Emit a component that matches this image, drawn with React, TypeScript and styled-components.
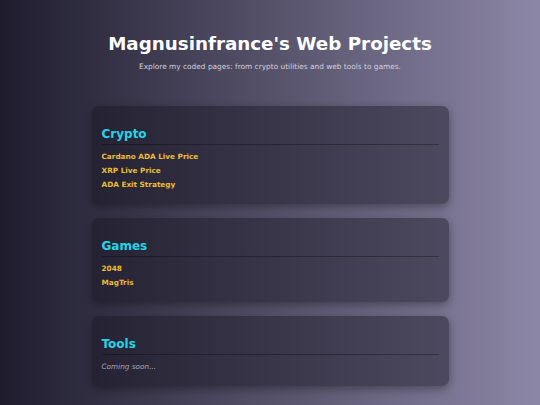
import styled, { createGlobalStyle } from 'styled-components';

type Section = {
  title: string;
  links: string[];
  empty?: string;
};

const sections: Section[] = [
  { title: 'Crypto', links: ['Cardano ADA Live Price', 'XRP Live Price', 'ADA Exit Strategy'] },
  { title: 'Games', links: ['2048', 'MagTris'] },
  { title: 'Tools', links: [], empty: 'Coming soon...' },
];

const App = () => {
  return (
    <>
      <GlobalStyle />
      <Page>
        <Header>
          <Title>Magnusinfrance's Web Projects</Title>
          <Subtitle>Explore my coded pages: from crypto utilities and web tools to games.</Subtitle>
        </Header>
        <Main>
          {sections.map((section) => (
            <Card key={section.title}>
              <CardTitle>{section.title}</CardTitle>
              {section.links.length > 0 ? (
                <LinkList>
                  {section.links.map((link) => (
                    <LinkItem key={link}>
                      <ProjectLink href="#">{link}</ProjectLink>
                    </LinkItem>
                  ))}
                </LinkList>
              ) : (
                <Empty>{section.empty}</Empty>
              )}
            </Card>
          ))}
        </Main>
      </Page>
    </>
  );
};

const GlobalStyle = createGlobalStyle`
  html, body {
    margin: 0;
    padding: 0;
  }
  body {
    font-family: "DejaVu Sans", Verdana, sans-serif;
    background: linear-gradient(to right, #1e1c2d, #8d87a7);
    min-height: 405px;
  }
`;

const Page = styled.div`
  min-height: 405px;
  padding: 30px 0 20px;
  box-sizing: border-box;
`;

const Header = styled.header`
  text-align: center;
  margin-bottom: 34px;
`;

const Title = styled.h1`
  margin: 0;
  font-size: 18.3px;
  line-height: 28px;
  font-weight: bold;
  color: #ffffff;
`;

const Subtitle = styled.p`
  margin: 4px 0 0;
  font-size: 7.4px;
  line-height: 10px;
  color: #d2d0dc;
`;

const Main = styled.main`
  width: 357px;
  margin: 0 auto;
  display: flex;
  flex-direction: column;
  gap: 14px;
`;

const Card = styled.section`
  background: rgba(22, 20, 34, 0.45);
  border-radius: 7px;
  padding: 20px 10px 12px;
  box-shadow: 0 3px 10px rgba(0, 0, 0, 0.35);
`;

const CardTitle = styled.h2`
  margin: 0 0 5px;
  padding-bottom: 2px;
  font-size: 12px;
  line-height: 16px;
  font-weight: bold;
  color: #22d6e8;
  border-bottom: 1px solid rgba(0, 0, 0, 0.3);
`;

const LinkList = styled.ul`
  list-style: none;
  margin: 0;
  padding: 0;
`;

const LinkItem = styled.li`
  font-size: 7.3px;
  line-height: 14px;
`;

const ProjectLink = styled.a`
  font-weight: bold;
  color: #ecbd34;
  text-decoration: none;
`;

const Empty = styled.p`
  margin: 0;
  font-size: 7.3px;
  line-height: 14px;
  font-style: italic;
  color: #a9a6b6;
`;

export default App;
